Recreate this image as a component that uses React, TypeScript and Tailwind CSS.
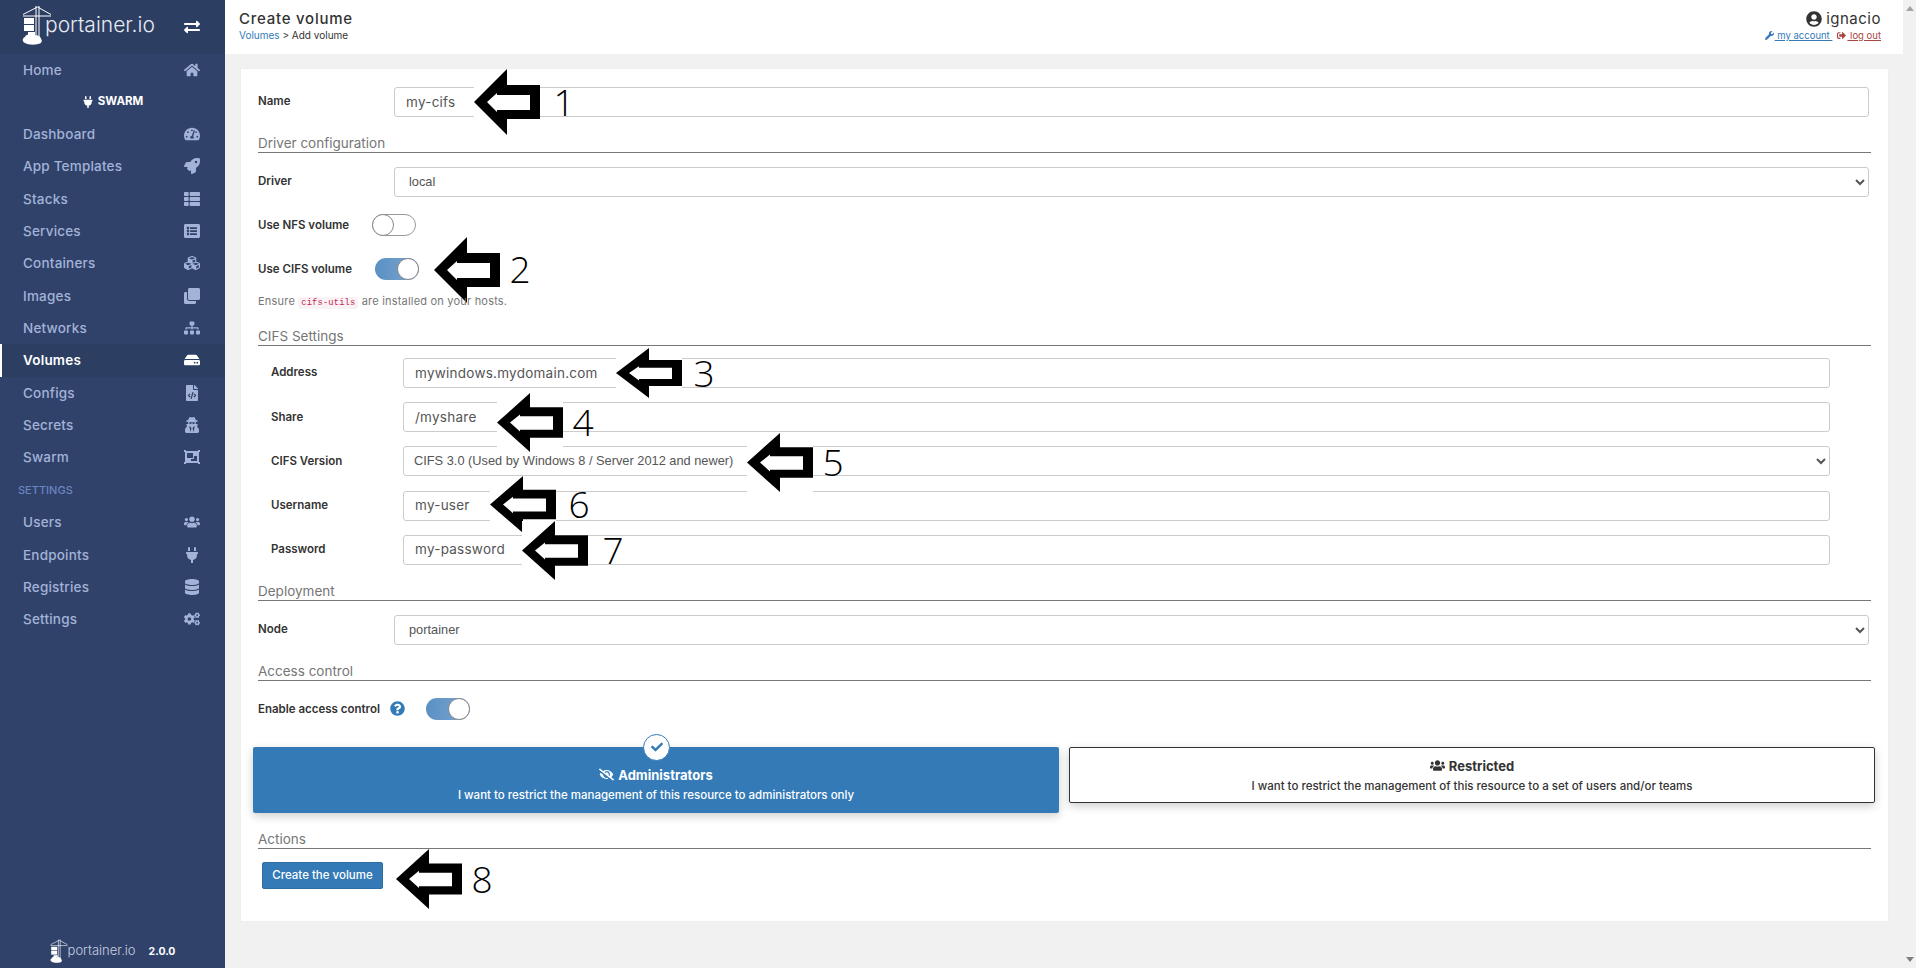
import type { ReactNode } from 'react';
import type { IconType } from 'react-icons';
import {
  FaHome, FaTachometerAlt, FaRocket, FaThList, FaListAlt, FaCubes, FaClone, FaSitemap, FaHdd,
  FaFileCode, FaUserSecret, FaObjectGroup, FaUsers, FaPlug, FaDatabase, FaCogs, FaExchangeAlt,
  FaUserCircle, FaWrench, FaSignOutAlt, FaQuestionCircle, FaEyeSlash, FaCheck,
} from 'react-icons/fa';

const font = 'font-[Inter,"Liberation_Sans",sans-serif]';

type NavEntry = { label: string; icon: IconType; active?: boolean };

const mainNav: NavEntry[] = [
  { label: 'Dashboard', icon: FaTachometerAlt },
  { label: 'App Templates', icon: FaRocket },
  { label: 'Stacks', icon: FaThList },
  { label: 'Services', icon: FaListAlt },
  { label: 'Containers', icon: FaCubes },
  { label: 'Images', icon: FaClone },
  { label: 'Networks', icon: FaSitemap },
  { label: 'Volumes', icon: FaHdd, active: true },
  { label: 'Configs', icon: FaFileCode },
  { label: 'Secrets', icon: FaUserSecret },
  { label: 'Swarm', icon: FaObjectGroup },
];

const settingsNav: NavEntry[] = [
  { label: 'Users', icon: FaUsers },
  { label: 'Endpoints', icon: FaPlug },
  { label: 'Registries', icon: FaDatabase },
  { label: 'Settings', icon: FaCogs },
];

// annotation arrows pasted over the form, each with its own white box
const pointers = [
  { n: 1, box: 'left-[474px] top-[69px] h-[66px]', num: 'left-[552px] top-[78px]' },
  { n: 2, box: 'left-[434px] top-[237px] h-[66px]', num: 'left-[508px] top-[245px]' },
  { n: 3, box: 'left-[616px] top-[348px] h-[50px]', num: 'left-[692px] top-[349px]' },
  { n: 4, box: 'left-[497px] top-[393px] h-[59px]', num: 'left-[571px] top-[398px]' },
  { n: 5, box: 'left-[747px] top-[433px] h-[59px]', num: 'left-[821px] top-[438px]' },
  { n: 6, box: 'left-[490px] top-[476px] h-[57px]', num: 'left-[567px] top-[480px]' },
  { n: 7, box: 'left-[522px] top-[521px] h-[59px]', num: 'left-[601px] top-[526px]' },
  { n: 8, box: 'left-[396px] top-[849px] h-[60px]', num: 'left-[470px] top-[855px]' },
];

function CraneLogo({ className }: { className: string }) {
  return (
    <svg viewBox="0 0 30 40" className={className} fill="none">
      <path d="M14 1v31M17 1v31M1 9.5 15.5 2 29 9.5M1 11h28" stroke="#fff" strokeWidth="1" />
      <rect x="2" y="13" width="10" height="6" fill="#fff" />
      <rect x="2" y="20" width="10" height="6" fill="#fff" />
      <rect x="6" y="27" width="7" height="4" fill="#fff" />
      <path d="M3 38c-3-1-3-5 0-6 1-3 6-3 8-1 3-2 8 0 8 3 2 2 0 5-3 5-3 1-10 1-13-1Z" fill="#fff" />
    </svg>
  );
}

function NavRow({ label, icon: Icon, active }: NavEntry) {
  return (
    <div
      className={`flex h-[32.35px] items-center border-l-2 pl-[21px] pr-[24px] ${
        active ? 'border-white bg-[#2d3e63] font-semibold text-white' : 'border-transparent font-medium text-[#a3b3d8]'
      }`}
    >
      <span className="flex-1 text-[13.5px] tracking-[0.2px]">{label}</span>
      <span className="flex w-[18px] justify-center">
        <Icon className="size-[16px]" />
      </span>
    </div>
  );
}

function Sidebar() {
  return (
    <aside className="flex w-[225px] shrink-0 flex-col bg-[#30426a]">
      <div className="flex h-[54px] items-center bg-[#2d3e63] pl-[22px] pr-[25px]">
        <CraneLogo className="mb-[4px] h-[40px] w-[30px] shrink-0" />
        <span className="mb-[5px] ml-[-7px] flex-1 text-[21px] font-light leading-none text-[#e8ebf2]">portainer.io</span>
        <FaExchangeAlt className="size-[16px] text-white" />
      </div>
      <NavRow label="Home" icon={FaHome} />
      <div className="flex h-[31.5px] items-center justify-center gap-1 text-[11.5px] font-bold text-white">
        <FaPlug className="size-[12px]" />
        SWARM
      </div>
      {mainNav.map((item) => (
        <NavRow key={item.label} {...item} />
      ))}
      <div className="flex h-[32.5px] items-center pl-[18px] text-[11px] font-medium text-[#6a85c0]">SETTINGS</div>
      {settingsNav.map((item) => (
        <NavRow key={item.label} {...item} />
      ))}
      <div className="mt-auto flex h-[43px] items-start justify-center gap-[13px] pt-[14px]">
        <div className="flex items-center">
          <CraneLogo className="h-[24px] w-[18px]" />
          <span className="text-[13px] font-light text-[#c9d0e0]">portainer.io</span>
        </div>
        <span className="pt-[5px] text-[10.5px] font-bold text-white">2.0.0</span>
      </div>
    </aside>
  );
}

function TopBar() {
  return (
    <header className="flex h-[54px] items-center justify-between bg-white pb-[3px] pl-[14px] pr-[22px]">
      <div>
        <div className="text-[15px] font-medium leading-[20px] tracking-[0.75px] text-[#333]">Create volume</div>
        <div className="text-[10px] leading-[13px] text-[#333]">
          <span className="text-[#337ab7]">Volumes</span> &gt; Add volume
        </div>
      </div>
      <div className="text-right">
        <div className="flex items-center justify-end gap-[4px] text-[15px] leading-[20px] tracking-[0.5px] text-[#333]">
          <FaUserCircle className="size-[16px]" />
          ignacio
        </div>
        <div className="flex items-center justify-end text-[9.5px] leading-[13px]">
          <FaWrench className="size-[9px] text-[#337ab7]" />
          <span className="ml-[1px] text-[#337ab7] underline">&nbsp;my account&nbsp;</span>
          <FaSignOutAlt className="ml-[5px] size-[9px] text-[#a94442]" />
          <span className="ml-[1px] text-[#a94442] underline">&nbsp;log out</span>
        </div>
      </div>
    </header>
  );
}

function SectionTitle({ children, className }: { children: ReactNode; className: string }) {
  return (
    <div className={`h-[18px] border-b border-[#777] text-[13.5px] leading-[17px] text-[#767676] ${className}`}>
      {children}
    </div>
  );
}

function TextField({ label, value, labelWidth }: { label: string; value: string; labelWidth: string }) {
  return (
    <div className="flex items-center">
      <label className={`${labelWidth} shrink-0 text-[11.5px] font-semibold text-[#333]`}>{label}</label>
      <input
        readOnly
        value={value}
        className="h-[30px] flex-1 rounded-[3px] border border-[#ccc] bg-white px-[11px] pb-[1px] text-[13.5px] tracking-[0.25px] text-[#555]"
      />
    </div>
  );
}

function SelectField({ label, value, labelWidth, inset }: { label: string; value: string; labelWidth: string; inset: string }) {
  return (
    <div className="flex items-center">
      <label className={`${labelWidth} shrink-0 text-[11.5px] font-semibold text-[#333]`}>{label}</label>
      <select
        value={value}
        onChange={() => undefined}
        className={`h-[30px] flex-1 rounded-[3px] border border-[#ccc] bg-white pb-[1px] font-['Liberation_Sans',sans-serif] text-[12.8px] text-[#555] ${inset}`}
      >
        <option>{value}</option>
      </select>
    </div>
  );
}

function Toggle({ on, className }: { on: boolean; className: string }) {
  return (
    <span
      className={`relative block h-[22px] w-[44px] shrink-0 rounded-full ${
        on ? 'bg-gradient-to-r from-[#5b90c4] to-[#7aa5cf]' : 'border border-[#999] bg-white'
      } ${className}`}
    >
      <span
        className={`absolute h-[22px] w-[22px] rounded-full border border-[#888] bg-white ${
          on ? 'right-0 top-0' : 'left-[-1px] top-[-1px]'
        }`}
      />
    </span>
  );
}

function Form() {
  return (
    <section className="ml-[15px] mr-[14px] mt-[14px] border border-[#eee] bg-white px-[17px] pb-[32px] pt-[18px]">
      <div className="mr-[2px]">
        <TextField label="Name" value="my-cifs" labelWidth="w-[136px]" />
      </div>

      <SectionTitle className="mt-[18px]">Driver configuration</SectionTitle>
      <div className="mr-[2px] mt-[14px]">
        <SelectField label="Driver" value="local" labelWidth="w-[136px]" inset="pl-[10px]" />
      </div>

      <div className="mt-[17px] flex items-center">
        <span className="w-[114px] pt-[2px] text-[11.5px] font-semibold text-[#333]">Use NFS volume</span>
        <Toggle on={false} className="" />
      </div>
      <div className="mt-[22px] flex items-center">
        <span className="w-[117px] pt-[2px] text-[11.5px] font-semibold text-[#333]">Use CIFS volume</span>
        <Toggle on className="" />
      </div>
      {/* this line stays readable through the arrow in the reference */}
      <p className="relative z-10 mt-[13px] h-[16px] text-[11px] leading-[16px] tracking-[0.2px] text-[#777]">
        Ensure{' '}
        <code className="rounded-[3px] bg-[#f9f2f4] px-[3px] py-[1px] font-['Liberation_Mono',monospace] text-[8.7px] text-[#c7254e]">
          cifs-utils
        </code>{' '}
        are installed on your hosts.
      </p>

      <SectionTitle className="mt-[19px]">CIFS Settings</SectionTitle>
      <div className="mt-[12px] flex flex-col gap-[14.2px] pl-[13px] pr-[41px]">
        <TextField label="Address" value="mywindows.mydomain.com" labelWidth="w-[132px]" />
        <TextField label="Share" value="/myshare" labelWidth="w-[132px]" />
        <SelectField label="CIFS Version" value="CIFS 3.0 (Used by Windows 8 / Server 2012 and newer)" labelWidth="w-[132px]" inset="pl-[6px]" />
        <TextField label="Username" value="my-user" labelWidth="w-[132px]" />
        <TextField label="Password" value="my-password" labelWidth="w-[132px]" />
      </div>

      <SectionTitle className="mt-[18px]">Deployment</SectionTitle>
      <div className="mr-[2px] mt-[14px]">
        <SelectField label="Node" value="portainer" labelWidth="w-[136px]" inset="pl-[10px]" />
      </div>

      <SectionTitle className="mt-[18px]">Access control</SectionTitle>
      <div className="mt-[17px] flex items-center">
        <span className="pt-[2px] text-[11.5px] font-semibold text-[#333]">Enable access control</span>
        <FaQuestionCircle className="ml-[10px] size-[15px] text-[#337ab7]" />
        <Toggle on className="ml-[21px]" />
      </div>

      <div className="ml-[-5px] mr-[-4px] mt-[27px] grid grid-cols-2 items-start gap-[10px]">
        <div className="relative flex h-[66px] flex-col items-center rounded-[2px] bg-[#337ab7] pt-[19px] text-white shadow-[0_3px_10px_rgba(0,0,0,0.2)]">
          <span className="absolute left-[390px] top-[-13px] flex size-[27px] items-center justify-center rounded-full border border-[#337ab7] bg-white">
            <FaCheck className="size-[12px] text-[#337ab7]" />
          </span>
          <div className="flex items-center gap-[4px] text-[13px] font-bold leading-[18px]">
            <FaEyeSlash className="size-[15px]" />
            Administrators
          </div>
          <div className="mt-[3px] text-[11.5px] font-medium leading-[16px]">
            I want to restrict the management of this resource to administrators only
          </div>
        </div>
        <div className="flex h-[56px] flex-col items-center rounded-[2px] border border-[#333] bg-white pt-[9px] text-[#333] shadow-[0_3px_10px_rgba(0,0,0,0.2)]">
          <div className="flex items-center gap-[4px] text-[13px] font-bold leading-[18px]">
            <FaUsers className="size-[15px]" />
            Restricted
          </div>
          <div className="mt-[3px] text-[11.5px] font-medium leading-[16px]">
            I want to restrict the management of this resource to a set of users and/or teams
          </div>
        </div>
      </div>

      <SectionTitle className="mt-[18px]">Actions</SectionTitle>
      <button className="ml-[4px] mt-[13px] block h-[27px] w-[121px] rounded-[2px] border border-[#2e6da4] bg-[#337ab7] text-[11.5px] font-medium text-white">
        Create the volume
      </button>
    </section>
  );
}

function Pointer({ n, box, num }: { n: number; box: string; num: string }) {
  return (
    <>
      <svg viewBox="0 0 66 66" preserveAspectRatio="none" className={`absolute w-[66px] ${box}`}>
        <rect width="66" height="66" fill="#fff" />
        <path d="M0 33 33 0v16h33v34H33v16Z" fill="#000" />
        <path d="M13 33 23 24v2h33v15H23v2Z" fill="#fff" />
      </svg>
      <span className={`absolute w-[24px] text-center font-['Open_Sans',sans-serif] text-[37px] font-light leading-[48px] text-black ${num}`}>
        {n}
      </span>
    </>
  );
}

function ScrollTrack() {
  return (
    <div className="flex w-[13px] shrink-0 flex-col items-center justify-between bg-[#f1f1f1] py-[6px]">
      <span className="size-0 border-x-[4px] border-b-[5px] border-x-transparent border-b-[#a3a3a3]" />
      <span className="size-0 border-x-[4px] border-t-[5px] border-x-transparent border-t-[#7f7f7f]" />
    </div>
  );
}

export default function App() {
  return (
    <div className={`relative flex h-screen overflow-hidden bg-[#f1f1f1] ${font}`}>
      <Sidebar />
      <main className="min-w-0 flex-1">
        <TopBar />
        <Form />
      </main>
      <ScrollTrack />
      {pointers.map((p) => (
        <Pointer key={p.n} {...p} />
      ))}
    </div>
  );
}
